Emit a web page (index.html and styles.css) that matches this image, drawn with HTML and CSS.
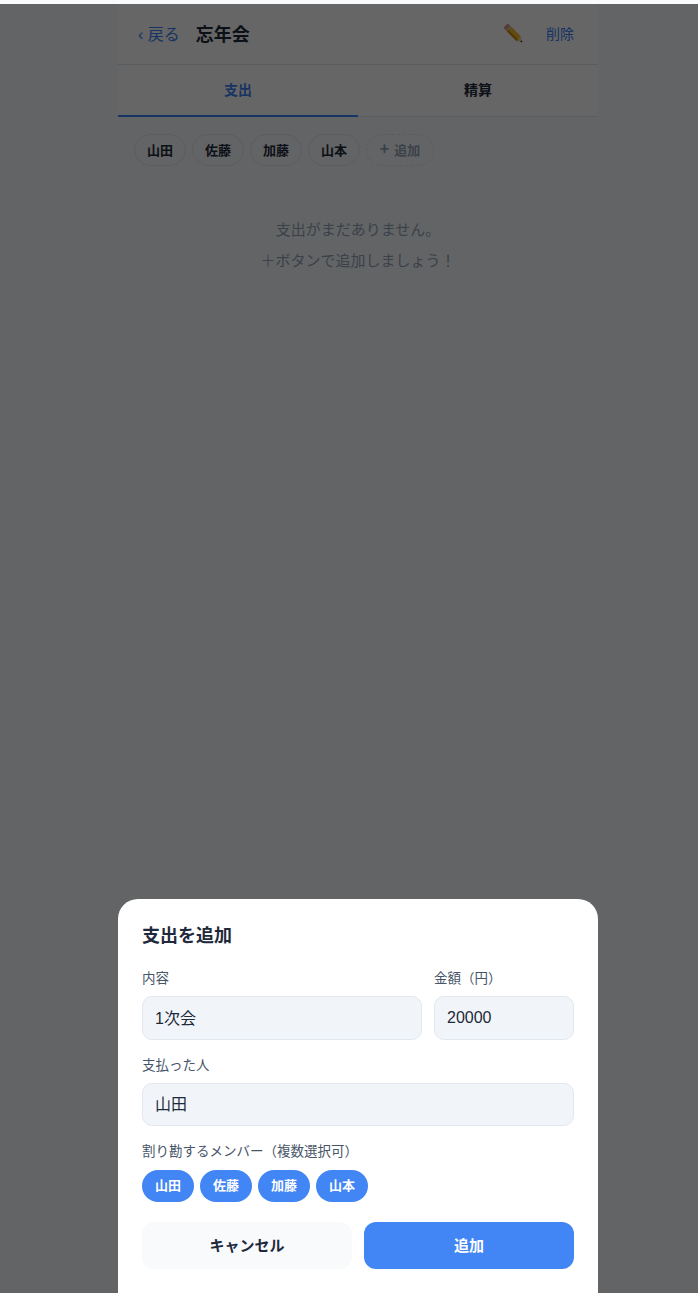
FILE: index.html
```html
<!DOCTYPE html>
<html lang="ja">
<head>
    <meta charset="UTF-8">
    <meta name="viewport" content="width=device-width, initial-scale=1.0">
    <title>忘年会</title>
    <link rel="stylesheet" href="styles.css">
</head>
<body>
    <div class="app">
        <header class="top-bar">
            <a class="back-link">‹ 戻る</a>
            <h1 class="event-name">忘年会</h1>
            <span class="spacer"></span>
            <svg class="edit-icon" width="20" height="20" viewBox="0 0 20 20">
                <g transform="rotate(45 10 10)">
                    <rect x="-2" y="6.8" width="3.4" height="6.4" rx="1.6" fill="#e58a8a"/>
                    <rect x="1" y="6.8" width="2" height="6.4" fill="#b9b9b9"/>
                    <rect x="3" y="6.8" width="14" height="6.4" fill="#f4b92e"/>
                    <rect x="3" y="11" width="14" height="2.2" fill="#d08c10"/>
                    <path d="M17 6.8 L21 10 L17 13.2 Z" fill="#ecd2a6"/>
                    <path d="M19.8 9 L22 10 L19.8 11 Z" fill="#2b2b2b"/>
                </g>
            </svg>
            <a class="delete-link">削除</a>
        </header>
        <nav class="tabs">
            <div class="tab tab-active">支出</div>
            <div class="tab">精算</div>
        </nav>
        <div class="members">
            <span class="member">山田</span>
            <span class="member">佐藤</span>
            <span class="member">加藤</span>
            <span class="member">山本</span>
            <span class="member member-add"><span class="add-plus">+</span>追加</span>
        </div>
        <div class="empty">
            <p>支出がまだありません。</p>
            <p>＋ボタンで追加しましょう！</p>
        </div>
    </div>

    <div class="overlay">
        <form class="sheet">
            <h2 class="sheet-title">支出を追加</h2>
            <div class="field-row">
                <div class="field field-grow">
                    <label class="field-label">内容</label>
                    <div class="input input-cjk">1次会</div>
                </div>
                <div class="field field-amount">
                    <label class="field-label">金額（円）</label>
                    <div class="input">20000</div>
                </div>
            </div>
            <div class="field">
                <label class="field-label">支払った人</label>
                <div class="input input-cjk input-select">山田</div>
            </div>
            <div class="field">
                <label class="field-label">割り勘するメンバー（複数選択可）</label>
                <div class="chips">
                    <span class="chip">山田</span>
                    <span class="chip">佐藤</span>
                    <span class="chip">加藤</span>
                    <span class="chip">山本</span>
                </div>
            </div>
            <div class="actions">
                <button type="button" class="btn btn-cancel">キャンセル</button>
                <button type="button" class="btn btn-submit">追加</button>
            </div>
        </form>
    </div>
</body>
</html>
```

FILE: styles.css
```css
* {
    box-sizing: border-box;
}

html,
body {
    height: 100%;
}

body {
    margin: 0;
    padding-top: 4px;
    background-color: #f8fafc;
    color: #1e293b;
    font-family: "Liberation Sans", "Noto Sans CJK JP", sans-serif;
    overflow: hidden;
}

.app {
    width: 480px;
    margin-left: 118px;
}

.top-bar {
    display: flex;
    align-items: center;
    height: 61px;
    padding: 0 24px 2px 20px;
    background-color: #fff;
    border-bottom: 1px solid #e2e8f0;
}

.back-link {
    color: #3b82f6;
    font-size: 16px;
    margin-right: 16px;
}

.event-name {
    margin: 0;
    font-size: 18px;
    font-weight: 700;
}

.spacer {
    flex: 1;
}

.edit-icon {
    margin: 2px 22px 0 0;
}

.delete-link {
    color: #3b82f6;
    font-size: 14px;
}

.tabs {
    display: flex;
    height: 52px;
    background-color: #fff;
    border-bottom: 1px solid #e2e8f0;
}

.tab {
    flex: 1;
    display: flex;
    align-items: center;
    justify-content: center;
    padding-bottom: 4px;
    font-size: 14px;
    font-weight: 700;
}

.tab-active {
    padding-bottom: 2px;
    color: #3b82f6;
    border-bottom: 2px solid #3b82f6;
    height: 52px;
}

.members {
    display: flex;
    gap: 6px;
    padding: 17px 16px;
}

.member {
    display: flex;
    align-items: center;
    justify-content: center;
    width: 52px;
    height: 32px;
    padding-bottom: 2px;
    background-color: #f8fafc;
    border: 1px solid #e2e8f0;
    border-radius: 16px;
    font-size: 13px;
    font-weight: 700;
}

.member-add {
    width: 68px;
    background-color: transparent;
    border: 1px dashed #e2e8f0;
    color: #94a3b8;
}

.add-plus {
    margin-right: 5px;
    font-size: 16px;
    font-weight: 700;
}

.empty {
    margin-top: 31px;
    color: #94a3b8;
    font-size: 15px;
    text-align: center;
}

.empty p {
    margin: 0;
    line-height: 31px;
}

.overlay {
    position: fixed;
    top: 4px;
    right: 0;
    bottom: 0;
    left: 0;
    display: flex;
    align-items: flex-end;
    padding-left: 118px;
    background-color: rgba(0, 0, 0, 0.6);
    backdrop-filter: blur(0.5px);
}

.sheet {
    width: 480px;
    height: 394px;
    padding: 25px 24px 0;
    background-color: #fff;
    border-radius: 20px 20px 0 0;
}

.sheet-title {
    margin: 0 0 21px;
    font-size: 18px;
    font-weight: 700;
    line-height: 24px;
}

.field-row {
    display: flex;
    gap: 12px;
}

.field {
    margin-bottom: 16px;
}

.field-grow {
    flex: 1;
}

.field-amount {
    width: 140px;
}

.field-label {
    display: block;
    margin-bottom: 8px;
    color: #475569;
    font-size: 13.5px;
    line-height: 19px;
}

.input {
    display: flex;
    align-items: center;
    height: 44px;
    padding: 0 12px;
    background-color: #f1f5f9;
    border: 1px solid #e2e8f0;
    border-radius: 10px;
    font-size: 16px;
}

.input-cjk {
    padding-bottom: 3px;
}

.input-select {
    height: 43px;
}

.chips {
    display: flex;
    gap: 6px;
    margin-top: 9px;
}

.chip {
    display: flex;
    align-items: center;
    justify-content: center;
    width: 52px;
    height: 32px;
    padding-bottom: 3px;
    background-color: #4285f4;
    border-radius: 16px;
    color: #fff;
    font-size: 13px;
    font-weight: 700;
}

.actions {
    display: flex;
    gap: 12px;
    margin-top: 20px;
}

.btn {
    flex: 1;
    height: 47px;
    padding: 0 0 2px;
    border: none;
    border-radius: 12px;
    font-family: inherit;
    font-size: 15px;
    font-weight: 700;
}

.btn-cancel {
    background-color: #f8fafc;
    color: #1e293b;
}

.btn-submit {
    background-color: #4285f4;
    color: #fff;
}
```
